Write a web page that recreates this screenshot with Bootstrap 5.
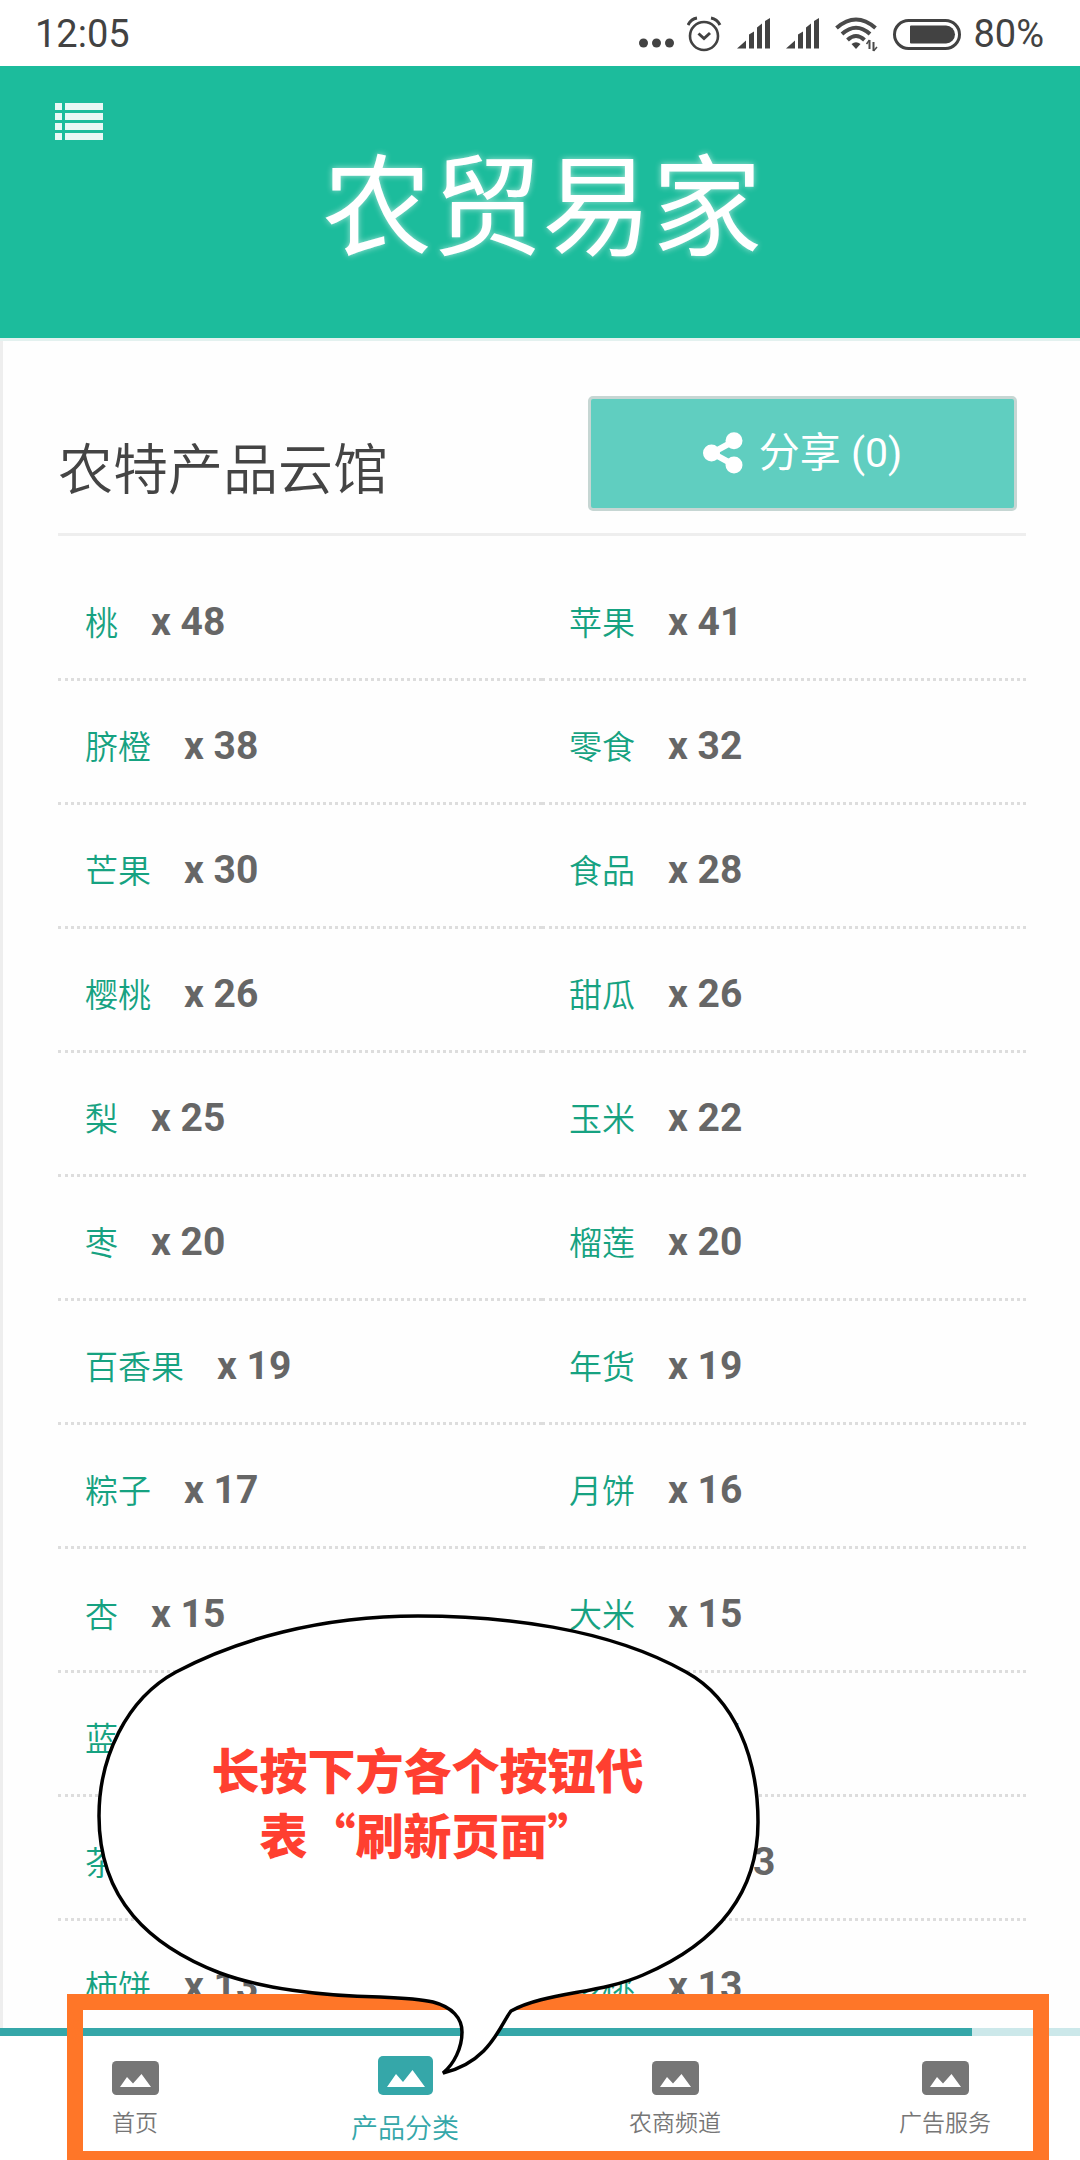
<!DOCTYPE html>
<html lang="zh-CN">
<head>
<meta charset="utf-8">
<meta name="viewport" content="width=device-width, initial-scale=1">
<title>农贸易家</title>
<link href="https://cdn.jsdelivr.net/npm/bootstrap@5.3.0/dist/css/bootstrap.min.css" rel="stylesheet">
<style>
  body { font-family: Roboto, "Noto Sans CJK SC", sans-serif; color: #444; background: #fefefe; }
  .status-bar { height: 66px; padding: 2px 36px 0 35px; font-size: 38px; color: #424242; background: #fff; }
  .status-bar .icons { gap: 12px; }
  .site-head { height: 275px; background: #1cbc9c; border-bottom: 3px solid #e3f1ef; }
  .menu-btn { left: 55px; top: 36px; }
  .site-name { font-size: 110px; line-height: 160px; padding-top: 64px; padding-left: 4px; text-shadow: 0 0 6px rgba(255,255,255,.6); }
  .page-body { border-left: 3px solid #eee; padding: 55px 54px 0 55px; min-height: 0; }
  .section-head { border-bottom: 3px solid #eee; padding-bottom: 22px; margin-bottom: 21px; }
  .section-head h2 { font-size: 55px; line-height: 64px; font-weight: 350; color: #444; padding-bottom: 9px; }
  .share-btn { width: 429px; height: 115px; margin-right: 9px; font-size: 41px; font-weight: 400; gap: 16px;
    color: #fff; background: #60cec0; border: 3px solid #c6d6d3; border-radius: 5px; }
  .share-btn:hover { color: #fff; background: #4fc3b4; border-color: #c6d6d3; }
  .goods { height: 124px; gap: 33px; padding: 35px 27px 0; border-bottom: 3px dotted #ddd; line-height: 60px; }
  .goods a { font-size: 33px; color: #16a281; font-weight: 350; }
  .goods strong { font-size: 39px; color: #666; }
  .tab-bar { height: 132px; background: #fff; }
  .load-track { height: 8px; border-radius: 0; background: #cce8ea; }
  .load-track .progress-bar { background: #35a7a9; }
  .tab-item { height: 124px; padding-bottom: 22px; font-size: 23px; line-height: 28px; font-weight: 350; color: #767676; gap: 15px; }
  .tab-item.active { font-size: 27px; line-height: 32px; color: #35a7a9; gap: 18px; padding-bottom: 15px; }
  .hint-frame { left: 67px; right: 31px; top: -34px; bottom: 0; border: 16px solid #ff7628; border-bottom-width: 9px; pointer-events: none; }
  .hint-bubble { left: 97px; bottom: 84px; width: 663px; height: 462px; pointer-events: none; }
  .hint-bubble p { inset: 122px 2px auto 0; font: 900 48px/65px "Noto Sans CJK SC", sans-serif; color: #ff3f30; }
</style>
</head>
<body>
<div class="vh-100 d-flex flex-column overflow-hidden">
  <div class="status-bar d-flex align-items-center justify-content-between flex-shrink-0">
    <span>12:05</span>
    <div class="icons d-flex align-items-center">
      <svg width="36" height="34" viewBox="0 0 36 34" fill="#424242" aria-hidden="true"><circle cx="4.500" cy="26" r="4.500"/><circle cx="17.500" cy="26" r="4.500"/><circle cx="30.500" cy="26" r="4.500"/></svg>
      <svg width="38" height="36" viewBox="0 0 38 36" fill="none" stroke="#424242" stroke-width="2.600" aria-hidden="true"><circle cx="17" cy="20" r="14"/><path d="M11.500 17.500l5.500 5 6-5.500M1 9q3-6 9-7M33 9q-3-6-9-7" stroke-width="3"/></svg>
      <svg width="37" height="34" viewBox="0 0 37 34" fill="#424242" aria-hidden="true"><path d="M0 31.500l9-8v8zM12 17.500l5-3v17h-5zM20 10.500l5-4v25h-5zM28 4l5-3v30.500h-5z"/></svg>
      <svg width="37" height="34" viewBox="0 0 37 34" fill="#424242" aria-hidden="true"><path d="M0 31.500l9-8v8zM12 17.500l5-3v17h-5zM20 10.500l5-4v25h-5zM28 4l5-3v30.500h-5z"/></svg>
      <svg width="46" height="36" viewBox="0 0 46 36" fill="none" stroke="#4a4a4a" stroke-width="4" aria-hidden="true"><path d="M1.500 12Q21 -5 40.500 12M7 18Q21 5.500 35 18M12.500 24Q21 16 29.500 24"/><path d="M16.500 28q4.500-3.500 9 0L21 33z" fill="#424242" stroke="none"/><path d="M34.500 24v9M38.500 26v9" stroke-width="2"/><path d="M31.500 28l3-4M38.500 35l3.500-4" stroke-width="1.500"/></svg>
      <svg width="68" height="31" viewBox="0 0 68 31" aria-hidden="true"><rect x="1.500" y="1.500" width="65" height="28" rx="14" fill="none" stroke="#424242" stroke-width="3"/><path d="M18 6.500h35a9 9 0 010 18H18a1 1 0 01-1-1v-16a1 1 0 011-1z" fill="#424242"/></svg>
      <span>80%</span>
    </div>
  </div>

  <header class="site-head position-relative text-center flex-shrink-0">
    <button type="button" class="menu-btn btn p-0 border-0 position-absolute lh-1" aria-label="菜单">
      <svg width="48" height="38" viewBox="0 0 48 38" fill="#e8f8f5"><path d="M0 1h7v7H0zM10 1h38v7H10zM0 11h7v7H0zM10 11h38v7H10zM0 21h7v7H0zM10 21h38v7H10zM0 31h7v7H0zM10 31h38v7H10z"/></svg>
    </button>
    <h1 class="site-name text-white fw-normal m-0">农贸易家</h1>
  </header>

  <main class="page-body flex-fill overflow-hidden">
    <div class="section-head d-flex justify-content-between align-items-end">
      <h2 class="m-0">农特产品云馆</h2>
      <button type="button" class="share-btn btn d-flex align-items-center justify-content-center">
        <svg width="40" height="44" viewBox="0 0 40 44" fill="#fff" aria-hidden="true"><path d="M31 9L9 21l22 12" fill="none" stroke="#fff" stroke-width="6"/><circle cx="8.500" cy="21" r="8.500"/><circle cx="31" cy="8.700" r="8.500"/><circle cx="31" cy="33" r="8.500"/></svg>
        <span>分享 (0)</span>
      </button>
    </div>
    <ul class="row g-0 list-unstyled m-0">
      <li class="col-6 goods d-flex align-items-baseline"><a href="#" class="text-decoration-none">桃</a><strong>x 48</strong></li>
      <li class="col-6 goods d-flex align-items-baseline"><a href="#" class="text-decoration-none">苹果</a><strong>x 41</strong></li>
      <li class="col-6 goods d-flex align-items-baseline"><a href="#" class="text-decoration-none">脐橙</a><strong>x 38</strong></li>
      <li class="col-6 goods d-flex align-items-baseline"><a href="#" class="text-decoration-none">零食</a><strong>x 32</strong></li>
      <li class="col-6 goods d-flex align-items-baseline"><a href="#" class="text-decoration-none">芒果</a><strong>x 30</strong></li>
      <li class="col-6 goods d-flex align-items-baseline"><a href="#" class="text-decoration-none">食品</a><strong>x 28</strong></li>
      <li class="col-6 goods d-flex align-items-baseline"><a href="#" class="text-decoration-none">樱桃</a><strong>x 26</strong></li>
      <li class="col-6 goods d-flex align-items-baseline"><a href="#" class="text-decoration-none">甜瓜</a><strong>x 26</strong></li>
      <li class="col-6 goods d-flex align-items-baseline"><a href="#" class="text-decoration-none">梨</a><strong>x 25</strong></li>
      <li class="col-6 goods d-flex align-items-baseline"><a href="#" class="text-decoration-none">玉米</a><strong>x 22</strong></li>
      <li class="col-6 goods d-flex align-items-baseline"><a href="#" class="text-decoration-none">枣</a><strong>x 20</strong></li>
      <li class="col-6 goods d-flex align-items-baseline"><a href="#" class="text-decoration-none">榴莲</a><strong>x 20</strong></li>
      <li class="col-6 goods d-flex align-items-baseline"><a href="#" class="text-decoration-none">百香果</a><strong>x 19</strong></li>
      <li class="col-6 goods d-flex align-items-baseline"><a href="#" class="text-decoration-none">年货</a><strong>x 19</strong></li>
      <li class="col-6 goods d-flex align-items-baseline"><a href="#" class="text-decoration-none">粽子</a><strong>x 17</strong></li>
      <li class="col-6 goods d-flex align-items-baseline"><a href="#" class="text-decoration-none">月饼</a><strong>x 16</strong></li>
      <li class="col-6 goods d-flex align-items-baseline"><a href="#" class="text-decoration-none">杏</a><strong>x 15</strong></li>
      <li class="col-6 goods d-flex align-items-baseline"><a href="#" class="text-decoration-none">大米</a><strong>x 15</strong></li>
      <li class="col-6 goods d-flex align-items-baseline"><a href="#" class="text-decoration-none">蓝莓</a><strong>x 14</strong></li>
      <li class="col-6 goods d-flex align-items-baseline"><a href="#" class="text-decoration-none">李子</a><strong>x 14</strong></li>
      <li class="col-6 goods d-flex align-items-baseline"><a href="#" class="text-decoration-none">茶叶</a><strong>x 14</strong></li>
      <li class="col-6 goods d-flex align-items-baseline"><a href="#" class="text-decoration-none">猕猴桃</a><strong>x 13</strong></li>
      <li class="col-6 goods d-flex align-items-baseline"><a href="#" class="text-decoration-none">柿饼</a><strong>x 13</strong></li>
      <li class="col-6 goods d-flex align-items-baseline"><a href="#" class="text-decoration-none">核桃</a><strong>x 13</strong></li>
    </ul>
  </main>

  <footer class="tab-bar position-relative flex-shrink-0">
    <div class="load-track progress" role="progressbar" aria-label="加载进度" aria-valuenow="90" aria-valuemin="0" aria-valuemax="100">
      <div class="progress-bar" style="width: 90%"></div>
    </div>
    <nav class="row g-0">
      <a href="#" class="tab-item col-3 d-flex flex-column align-items-center justify-content-end text-decoration-none">
        <svg width="47" height="34" viewBox="0 0 47 34" aria-hidden="true"><rect width="47" height="34" rx="4.500" fill="#767676"/><path d="M8 26l7-10 6 6.500L29.500 13 39 26z" fill="#fff"/></svg>
        <span>首页</span>
      </a>
      <a href="#" class="tab-item active col-3 d-flex flex-column align-items-center justify-content-end text-decoration-none" aria-current="page">
        <svg width="55" height="39" viewBox="0 0 55 39" aria-hidden="true"><rect width="55" height="39" rx="5" fill="#35a7a9"/><path d="M9 31l9-13 7 8L34.500 14 47 31z" fill="#fff"/></svg>
        <span>产品分类</span>
      </a>
      <a href="#" class="tab-item col-3 d-flex flex-column align-items-center justify-content-end text-decoration-none">
        <svg width="47" height="34" viewBox="0 0 47 34" aria-hidden="true"><rect width="47" height="34" rx="4.500" fill="#767676"/><path d="M8 26l7-10 6 6.500L29.500 13 39 26z" fill="#fff"/></svg>
        <span>农商频道</span>
      </a>
      <a href="#" class="tab-item col-3 d-flex flex-column align-items-center justify-content-end text-decoration-none">
        <svg width="47" height="34" viewBox="0 0 47 34" aria-hidden="true"><rect width="47" height="34" rx="4.500" fill="#767676"/><path d="M8 26l7-10 6 6.500L29.500 13 39 26z" fill="#fff"/></svg>
        <span>广告服务</span>
      </a>
    </nav>
    <div class="hint-frame position-absolute"></div>
    <div class="hint-bubble position-absolute">
      <svg class="d-block" width="663" height="462" viewBox="97 1614 663 462" aria-hidden="true">
        <path d="M418 1616C320 1616 236 1640 176 1672C126 1699 99 1758 99 1816C99 1900 150 1946 220 1973C260 1988 320 1996 380 1997C403 1998 420 1999 433 2002C452 2007 462 2018 462 2032C462 2048 454 2064 443 2073C490 2062 500 2025 511 2011C545 1992 600 1994 643 1975C720 1942 758 1890 758 1822C758 1758 735 1699 686 1672C606 1627 500 1616 418 1616Z" fill="#fff" stroke="#000" stroke-width="3.500"/>
      </svg>
      <p class="position-absolute text-center m-0">长按下方各个按钮代<br>表“刷新页面”</p>
    </div>
  </footer>
</div>
<script src="https://cdn.jsdelivr.net/npm/bootstrap@5.3.0/dist/js/bootstrap.bundle.min.js"></script>
</body>
</html>
